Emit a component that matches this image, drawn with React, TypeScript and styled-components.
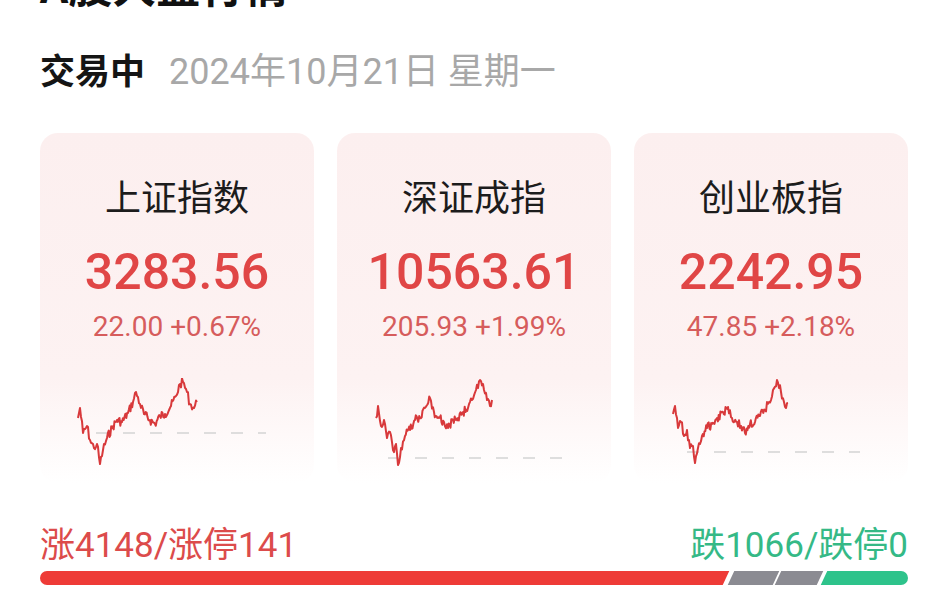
import React from 'react';
import styled, { createGlobalStyle } from 'styled-components';

type Pt = [number, number];

interface IndexItem {
  name: string;
  value: string;
  change: string;
  baseline: number;
  dashFrom: number;
  dashTo: number;
  keys: Pt[];
  seed: number;
}

const GlobalStyle = createGlobalStyle`
  html, body {
    margin: 0;
    padding: 0;
    background: #ffffff;
    overflow: hidden;
  }
  body {
    font-family: Roboto, "Noto Sans CJK SC", sans-serif;
  }
`;

const Page = styled.div`
  width: 948px;
  height: 592px;
  padding: 0 40px;
  box-sizing: border-box;
  overflow: hidden;
`;

const Heading = styled.h1`
  margin: -38px 0 0;
  font-size: 44px;
  line-height: 44px;
  font-weight: 700;
  color: #111;
  font-family: "Noto Sans CJK SC", sans-serif;
`;

const StatusRow = styled.div`
  display: flex;
  align-items: center;
  gap: 24px;
  margin-top: 42px;
  height: 40px;
`;

const Status = styled.span`
  font-size: 35px;
  font-weight: 700;
  color: #151515;
  font-family: "Noto Sans CJK SC", sans-serif;
`;

const DateText = styled.span`
  font-size: 36px;
  color: #a8a8a8;
  font-weight: 400;
`;

const Cards = styled.div`
  display: grid;
  grid-template-columns: repeat(3, 274px);
  column-gap: 23px;
  margin-top: 45px;
`;

const Card = styled.div`
  height: 350px;
  border-radius: 18px;
  padding-top: 40px;
  box-sizing: border-box;
  background: linear-gradient(180deg, #fcefef 0%, #fdf2f2 70%, #ffffff 100%);
  display: flex;
  flex-direction: column;
  align-items: center;
`;

const CardTitle = styled.div`
  font-size: 36px;
  line-height: 44px;
  color: #1c1c1c;
  font-family: "Noto Sans CJK SC", sans-serif;
`;

const CardValue = styled.div`
  margin-top: 25px;
  font-size: 50px;
  line-height: 60px;
  font-weight: 500;
  color: #e04646;
`;

const CardChange = styled.div`
  margin-top: 7px;
  font-size: 28px;
  line-height: 36px;
  color: #d65c5c;
`;

const Chart = styled.svg`
  margin-top: 33px;
  align-self: stretch;
  display: block;
`;

const CountRow = styled.div`
  display: flex;
  justify-content: space-between;
  align-items: center;
  margin-top: 38px;
  height: 40px;
`;

const Count = styled.span<{ $tone: 'up' | 'down' }>`
  font-size: 35px;
  color: ${(p) => (p.$tone === 'up' ? '#dc4b4b' : '#35b986')};
`;

const Bar = styled.div`
  display: flex;
  height: 14px;
  margin-top: 10px;
  border-radius: 7px;
  overflow: hidden;
`;

const Segment = styled.div<{ $grow: number; $color: string; $gap: number }>`
  flex: ${(p) => p.$grow} 1 0;
  background: ${(p) => p.$color};
  transform: skewX(-25deg);
  margin-right: ${(p) => p.$gap}px;
  &:first-child {
    margin-left: -8px;
  }
  &:last-child {
    margin-right: -8px;
  }
`;

const indices: IndexItem[] = [
  {
    name: '上证指数',
    value: '3283.56',
    change: '22.00 +0.67%',
    baseline: 55,
    dashFrom: 56,
    dashTo: 226,
    seed: 7,
    keys: [
      [38, 40], [40, 30], [43, 55], [47, 48], [50, 62], [54, 70], [57, 66], [60, 86],
      [63, 72], [67, 60], [72, 50], [77, 42], [82, 44], [88, 35], [93, 24], [96, 14],
      [100, 26], [104, 36], [110, 42], [115, 46], [120, 38], [125, 36], [131, 28],
      [136, 18], [140, 6], [143, 4], [147, 14], [150, 26], [154, 30], [157, 24],
    ],
  },
  {
    name: '深证成指',
    value: '10563.61',
    change: '205.93 +1.99%',
    baseline: 80,
    dashFrom: 51,
    dashTo: 226,
    seed: 19,
    keys: [
      [39, 40], [41, 28], [44, 48], [47, 42], [50, 60], [53, 54], [56, 72], [59, 66],
      [61, 87], [64, 70], [68, 58], [73, 52], [78, 42], [83, 40], [88, 30], [93, 20],
      [97, 34], [102, 40], [107, 44], [111, 50], [116, 42], [121, 40], [126, 34],
      [131, 30], [135, 22], [139, 12], [143, 2], [147, 12], [150, 22], [153, 28], [155, 22],
    ],
  },
  {
    name: '创业板指',
    value: '2242.95',
    change: '47.85 +2.18%',
    baseline: 74,
    dashFrom: 53,
    dashTo: 226,
    seed: 31,
    keys: [
      [39, 36], [41, 28], [44, 50], [47, 44], [50, 58], [53, 52], [56, 70], [59, 68],
      [61, 85], [64, 70], [68, 58], [73, 50], [78, 46], [83, 40], [89, 34], [94, 29],
      [98, 40], [103, 44], [107, 48], [111, 55], [116, 46], [121, 44], [126, 38],
      [131, 32], [135, 24], [139, 12], [143, 2], [147, 14], [150, 24], [152, 30], [154, 25],
    ],
  },
];

// jagged intraday line between key points
function buildPath(keys: Pt[], seed: number): string {
  let s = seed;
  const rand = () => {
    s = (s * 9301 + 49297) % 233280;
    return s / 233280;
  };
  const pts: string[] = [];
  for (let i = 0; i < keys.length - 1; i++) {
    const [x0, y0] = keys[i];
    const [x1, y1] = keys[i + 1];
    const steps = Math.max(2, Math.round((x1 - x0) / 0.9));
    for (let j = 0; j < steps; j++) {
      const t = j / steps;
      const x = x0 + (x1 - x0) * t;
      const y = y0 + (y1 - y0) * t + (j === 0 ? 0 : (rand() - 0.5) * 9);
      pts.push(`${x.toFixed(1)},${y.toFixed(1)}`);
    }
  }
  const last = keys[keys.length - 1];
  pts.push(`${last[0]},${last[1]}`);
  return 'M' + pts.join(' L');
}

const Sparkline: React.FC<{ item: IndexItem }> = ({ item }) => (
  <Chart width="274" height="90" viewBox="0 0 274 90">
    <line
      x1={item.dashFrom}
      y1={item.baseline}
      x2={item.dashTo}
      y2={item.baseline}
      stroke="#d4d4d4"
      strokeWidth="1.5"
      strokeDasharray="12 15"
    />
    <path
      d={buildPath(item.keys, item.seed)}
      fill="none"
      stroke="#d8393b"
      strokeWidth="2"
      strokeLinejoin="round"
    />
  </Chart>
);

const segments = [
  { grow: 682, color: '#ee3b37', gap: 5 },
  { grow: 44, color: '#8b8b92', gap: 2 },
  { grow: 41, color: '#8b8b92', gap: 5 },
  { grow: 90, color: '#2ec38b', gap: 0 },
];

const App: React.FC = () => (
  <Page>
    <GlobalStyle />
    <Heading>A股大盘行情</Heading>
    <StatusRow>
      <Status>交易中</Status>
      <DateText>2024年10月21日 星期一</DateText>
    </StatusRow>
    <Cards>
      {indices.map((item) => (
        <Card key={item.name}>
          <CardTitle>{item.name}</CardTitle>
          <CardValue>{item.value}</CardValue>
          <CardChange>{item.change}</CardChange>
          <Sparkline item={item} />
        </Card>
      ))}
    </Cards>
    <CountRow>
      <Count $tone="up">涨4148/涨停141</Count>
      <Count $tone="down">跌1066/跌停0</Count>
    </CountRow>
    <Bar>
      {segments.map((seg, i) => (
        <Segment key={i} $grow={seg.grow} $color={seg.color} $gap={seg.gap} />
      ))}
    </Bar>
  </Page>
);

export default App;
